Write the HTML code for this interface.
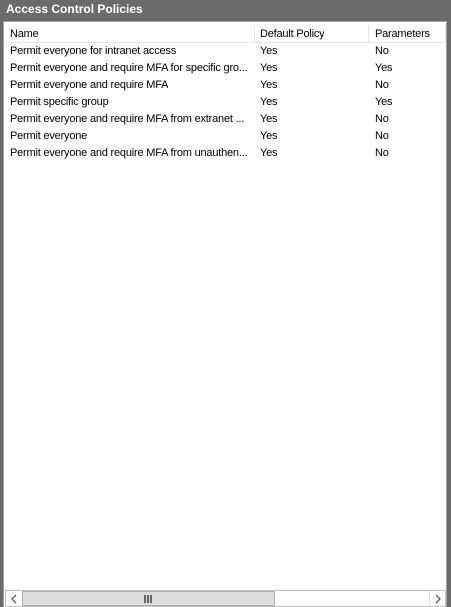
<!DOCTYPE html>
<html><head><style>
body{margin:0;width:451px;height:607px;background:#6b6b6b;position:relative;overflow:hidden;font-family:"Liberation Sans",sans-serif;font-size:11px;letter-spacing:-0.2px;color:#000}
.title{position:absolute;left:6px;top:2px;color:#fff;font-weight:bold;font-size:12px;letter-spacing:0}
.pane{position:absolute;left:3px;top:21px;width:444px;height:586px;background:#fff;border:1px solid #a0a0a0;border-bottom:none;box-sizing:border-box}
.c{position:absolute;white-space:nowrap;overflow:hidden}
.sep{position:absolute;top:3px;width:1px;height:17px;background:#e5e5e5}
.hl{position:absolute;left:3px;top:20px;width:438px;height:1px;background:#e5e5e5}
.sb{position:absolute;left:1px;top:568px;width:441px;height:17px;border:1px solid #c0c0c0;box-sizing:border-box;background:#fff}
.thumb{position:absolute;left:16px;top:0;width:253px;height:15px;background:#dcdcdc;border:1px solid #b0b0b0;box-sizing:border-box}
</style></head><body>
<div class="title">Access Control Policies</div>
<div class="pane">
<div class="c" style="left:6px;top:6px">Name</div>
<div class="sep" style="left:250px"></div>
<div class="c" style="left:256px;top:6px">Default Policy</div>
<div class="sep" style="left:364px"></div>
<div class="c" style="left:371px;top:6px">Parameters</div>
<div class="sep" style="left:441px"></div>
<div class="hl"></div>
<div style="position:absolute;left:0;top:23px">
<div class="c" style="left:6px;top:0">Permit everyone for intranet access</div><div class="c" style="left:256px;top:0">Yes</div><div class="c" style="left:371px;top:0">No</div>
<div class="c" style="left:6px;top:17px">Permit everyone and require MFA for specific gro...</div><div class="c" style="left:256px;top:17px">Yes</div><div class="c" style="left:371px;top:17px">Yes</div>
<div class="c" style="left:6px;top:34px">Permit everyone and require MFA</div><div class="c" style="left:256px;top:34px">Yes</div><div class="c" style="left:371px;top:34px">No</div>
<div class="c" style="left:6px;top:51px">Permit specific group</div><div class="c" style="left:256px;top:51px">Yes</div><div class="c" style="left:371px;top:51px">Yes</div>
<div class="c" style="left:6px;top:68px">Permit everyone and require MFA from extranet ...</div><div class="c" style="left:256px;top:68px">Yes</div><div class="c" style="left:371px;top:68px">No</div>
<div class="c" style="left:6px;top:85px">Permit everyone</div><div class="c" style="left:256px;top:85px">Yes</div><div class="c" style="left:371px;top:85px">No</div>
<div class="c" style="left:6px;top:102px">Permit everyone and require MFA from unauthen...</div><div class="c" style="left:256px;top:102px">Yes</div><div class="c" style="left:371px;top:102px">No</div>
</div>
<div class="sb">
<svg style="position:absolute;left:4px;top:3px" width="8" height="10"><path d="M6 1L2 5L6 9" stroke="#606060" stroke-width="1.3" fill="none"/></svg>
<div class="thumb"><svg style="position:absolute;left:121px;top:3px" width="9" height="8"><rect x="0" y="0" width="2" height="8" fill="#666"/><rect x="3" y="0" width="2" height="8" fill="#666"/><rect x="6" y="0" width="2" height="8" fill="#666"/></svg></div>
<div style="position:absolute;left:423px;top:0;width:1px;height:15px;background:#e0e0e0"></div>
<svg style="position:absolute;left:428px;top:3px" width="8" height="10"><path d="M2 1L6 5L2 9" stroke="#606060" stroke-width="1.3" fill="none"/></svg>
</div>
</div>
</body></html>
